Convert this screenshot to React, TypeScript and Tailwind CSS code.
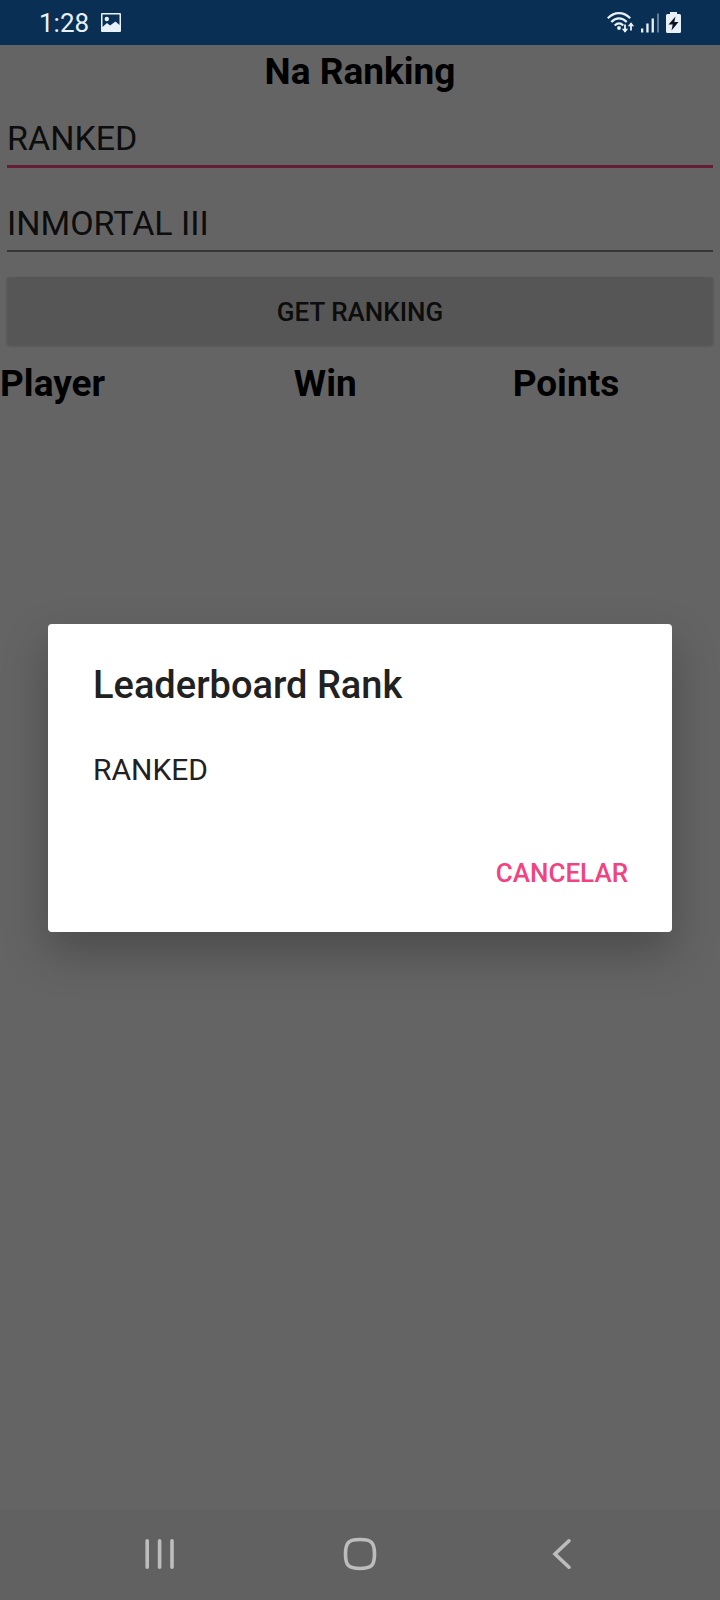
const columns = [
  { label: "Player", width: "w-[40.8%]" },
  { label: "Win", width: "w-[30.4%]" },
  { label: "Points", width: "w-[28.8%]" },
];

function StatusBar() {
  return (
    <header className="flex h-[45px] items-center justify-between bg-[#0a2f54] pr-[39px] pl-[39px] text-[#e9f1f8]">
      <div className="flex items-center gap-3">
        <span className="text-[26px] leading-8">1:28</span>
        <svg className="h-[20px] w-[20px]" viewBox="0 0 20 20" fill="currentColor" aria-hidden="true">
          <path
            fillRule="evenodd"
            d="M1 0h18Q20 0 20 1v17Q20 19 19 19H1Q0 19 0 18V1Q0 0 1 0ZM1.500 1.500v12.500L6 10l3 2.500 5.500-4 4 3.500V1.500ZM5.800 3.800a2.200 2.200 0 1 1 0 4.400 2.200 2.200 0 0 1 0-4.400Z"
          />
        </svg>
      </div>
      <div className="flex items-center gap-[6px]">
        <svg className="h-[22px] w-[28px]" viewBox="0 0 28 22" fill="none" stroke="currentColor" aria-hidden="true">
          <g strokeWidth="2.200">
            <path d="M.8 6.200C7.500-.5 16.500-.5 23.200 6.200" />
            <path d="M4.300 10C9 5.200 15 5.200 19.700 10" />
            <path d="M7.700 13.500C10.500 10.800 13.500 10.800 16.300 13.500" />
          </g>
          <circle cx="12" cy="16" r="1.900" fill="currentColor" stroke="none" />
          <path d="M18 12.500V20M24 18.500v-7" strokeWidth="1.800" />
          <path d="M14.800 16.800h6.400L18 20.800ZM20.800 14.200h6.400L24 10.200Z" fill="currentColor" stroke="none" />
        </svg>
        <svg className="h-[20px] w-[19px]" viewBox="0 0 19 20" fill="currentColor" aria-hidden="true">
          <rect x="0" y="15.500" width="2.300" height="4" />
          <rect x="5.300" y="10.500" width="2.300" height="9" />
          <rect x="10.600" y="5.500" width="2.300" height="14" />
          <rect x="16" y="0.500" width="2" height="19" opacity=".4" />
        </svg>
        <svg className="h-[21px] w-[15px]" viewBox="0 0 15 21" aria-hidden="true">
          <path d="M4 0h7v2h2.500Q15 2 15 3.500v16q0 1.500-1.500 1.500h-12Q0 21 0 19.500v-16Q0 2 1.500 2H4Z" fill="currentColor" />
          <path d="M9.500 4.500 2.500 12.500h4.200L5.500 18.500l7-8.500H8.300Z" fill="#0b1420" />
        </svg>
      </div>
    </header>
  );
}

function RankingForm() {
  return (
    <form className="flex flex-col" onSubmit={(event) => event.preventDefault()}>
      <div className="flex flex-col gap-7 px-[7px] pt-3">
        <input
          aria-label="Leaderboard Rank"
          defaultValue="RANKED"
          className="h-[57px] w-full border-b-[3px] border-[#ff4a88] bg-transparent text-[34px] text-[#212121] outline-none"
        />
        <input
          aria-label="Tier"
          defaultValue="INMORTAL III"
          className="h-[56px] w-full border-b-2 border-[#848484] bg-transparent text-[34px] text-[#212121] outline-none"
        />
      </div>
      <button
        type="submit"
        className="mx-[7px] mt-[25px] h-[68px] rounded-[2px] bg-[#d6d7d7] pt-[2px] text-[26px] font-medium text-[#212121] shadow-[0_1px_3px_rgba(0,0,0,0.2)]"
      >
        GET RANKING
      </button>
    </form>
  );
}

function RankDialog() {
  return (
    <div className="absolute inset-0 flex items-center justify-center bg-black/60 px-12">
      <section
        role="dialog"
        aria-modal="true"
        aria-labelledby="rank-title"
        className="flex w-full flex-col rounded-[4px] bg-white pt-10 pb-6 text-[#212121] shadow-[0_20px_45px_rgba(0,0,0,0.25)]"
      >
        <h2 id="rank-title" className="px-[45px] text-[38px] leading-[42px] font-medium">
          Leaderboard Rank
        </h2>
        <button type="button" className="mt-[46px] px-[45px] text-left text-[30px] leading-9">
          RANKED
        </button>
        <button
          type="button"
          className="mt-[52px] mr-7 h-[68px] self-end px-4 text-[26px] font-medium text-[#f0437f]"
        >
          CANCELAR
        </button>
      </section>
    </div>
  );
}

function NavigationBar() {
  return (
    <nav className="grid h-[90px] grid-cols-[4fr_1fr_4fr] bg-[#616161] pb-[3px] text-[#bdbdbd]">
      <button type="button" aria-label="Recent apps" className="flex items-center justify-center">
        <svg className="h-8 w-8" viewBox="0 0 32 32" fill="none" stroke="currentColor" strokeWidth="3.600" strokeLinecap="round">
          <path d="M3.200 2.800v26.400M15.600 2.800v26.400M28 2.800v26.400" />
        </svg>
      </button>
      <button type="button" aria-label="Home" className="flex items-center justify-center">
        <svg className="h-[34px] w-[34px]" viewBox="0 0 34 34" fill="none" stroke="currentColor" strokeWidth="3.600">
          <path d="M17 2.500C28.500 2.500 31.500 5.500 31.500 17S28.500 31.500 17 31.500 2.500 28.500 2.500 17 5.500 2.500 17 2.500Z" />
        </svg>
      </button>
      <button type="button" aria-label="Back" className="flex items-center justify-center pl-1">
        <svg className="h-8 w-5" viewBox="0 0 20 32" fill="none" stroke="currentColor" strokeWidth="3.600" strokeLinecap="round">
          <path d="M17 2.800 3 16l14 13.200" />
        </svg>
      </button>
    </nav>
  );
}

export default function App() {
  return (
    <div className="flex min-h-screen flex-col font-['Roboto',sans-serif]">
      <StatusBar />
      <main className="relative flex flex-1 flex-col bg-[#fafafa]">
        <h1 className="text-center text-[37px] leading-[54px] font-bold text-black">Na Ranking</h1>
        <RankingForm />
        <table className="mt-4 w-full table-fixed text-left text-[37px] leading-[46px] text-black">
          <thead>
            <tr>
              {columns.map((column) => (
                <th key={column.label} scope="col" className={`${column.width} p-0 font-bold`}>
                  {column.label}
                </th>
              ))}
            </tr>
          </thead>
          <tbody />
        </table>
        <RankDialog />
      </main>
      <NavigationBar />
    </div>
  );
}
